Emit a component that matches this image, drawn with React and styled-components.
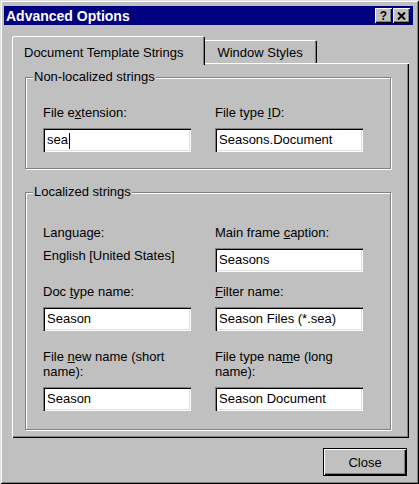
import styled, { createGlobalStyle } from "styled-components";

const GlobalStyle = createGlobalStyle`
  html, body {
    margin: 0;
    padding: 0;
    background: #c0c0c0;
  }
  * {
    box-sizing: border-box;
  }
`

const Window = styled.div`
  width: 419px;
  height: 484px;
  padding: 6px 6px 3px 4px;
  display: flex;
  flex-direction: column;
  background: #c0c0c0;
  font-family: "Liberation Sans", Arial, sans-serif;
  font-size: 13px;
  color: #000;
  box-shadow: inset 1px 1px #dfdfdf, inset -1px -1px #000, inset 2px 2px #fff, inset -2px -2px #808080;
`

const TitleBar = styled.div`
  height: 19px;
  padding: 0 3px 0 2px;
  display: flex;
  align-items: center;
  justify-content: space-between;
  background: #000080;
`

const Title = styled.span`
  color: #fff;
  font-weight: bold;
  font-size: 14px;
`

const TitleButtons = styled.div`
  display: flex;
  gap: 1px;
`

const TitleButton = styled.div`
  width: 17px;
  height: 15px;
  display: flex;
  align-items: center;
  justify-content: center;
  background: #c0c0c0;
  font-weight: bold;
  font-size: 12px;
  line-height: 1;
  box-shadow: inset 1px 1px #fff, inset -1px -1px #000, inset -2px -2px #808080;
`

const Body = styled.div`
  flex: 1;
  padding: 11px 4px 5px 8px;
  display: flex;
  flex-direction: column;
`

const TabRow = styled.div`
  height: 27px;
  display: flex;
  align-items: flex-end;
`

const Tab = styled.div`
  position: relative;
  height: ${({$active}) => $active ? "29px" : "23px"};
  margin-bottom: ${({$active}) => $active ? "-2px" : "0"};
  margin-left: ${({$active}) => $active ? "0" : "-2px"};
  padding: ${({$active}) => $active ? "9px 22px 0 12px" : "5px 14px 0 14px"};
  z-index: ${({$active}) => $active ? 2 : 1};
  line-height: 15px;
  white-space: nowrap;
  background: #c0c0c0;
  border-radius: 2px 2px 0 0;
  box-shadow: inset 1px 1px #fff, inset -1px 0 #000, inset -2px 0 #808080;
`

const Panel = styled.div`
  height: 375px;
  padding: 14px 18px 8px 13px;
  display: flex;
  flex-direction: column;
  gap: 23px;
  box-shadow: inset 1px 1px #fff, inset -1px -1px #000, inset -2px -2px #808080;
`

const GroupBox = styled.div`
  position: relative;
  padding: ${({$pad}) => $pad};
  border: 1px solid #808080;
  box-shadow: inset 1px 1px #fff, 1px 1px #fff;
`

const Legend = styled.span`
  position: absolute;
  top: -9px;
  left: 7px;
  padding: 0 1px;
  line-height: 15px;
  background: #c0c0c0;
`

const FieldGrid = styled.div`
  display: grid;
  grid-template-columns: 148px 148px;
  column-gap: 24px;
  row-gap: 12px;
`

const Field = styled.div`
  display: flex;
  flex-direction: column;
  margin-top: ${({$spaced}) => $spaced ? "6px" : "0"};
`

const Label = styled.label`
  line-height: 15px;
  margin-bottom: 8px;
`

const Key = styled.u`
  text-decoration: underline;
  text-underline-offset: 1px;
`

const StaticText = styled.span`
  line-height: 15px;
`

const TextBox = styled.div`
  height: 24px;
  padding: 0 4px;
  line-height: 24px;
  white-space: nowrap;
  overflow: hidden;
  background: #fff;
  box-shadow: inset 1px 1px #808080, inset 2px 2px #000, inset -1px -1px #fff, inset -2px -2px #dfdfdf;
`

const Caret = styled.span`
  display: inline-block;
  width: 1px;
  height: 16px;
  margin-left: 1px;
  vertical-align: middle;
  background: #000;
`

const Footer = styled.div`
  margin-top: 10px;
  padding-right: 2px;
  display: flex;
  justify-content: flex-end;
`

const Button = styled.button`
  width: 84px;
  height: 28px;
  padding: 0;
  font-family: inherit;
  font-size: 13px;
  color: #000;
  background: #c0c0c0;
  border: 1px solid #000;
  box-shadow: inset 1px 1px #fff, inset -1px -1px #000, inset -2px -2px #808080;
`

const CloseGlyph = () => (
    <svg width="9" height="8" viewBox="0 0 9 8">
        <path d="M1 0.5 L8 7.5 M8 0.5 L1 7.5" stroke="#000" strokeWidth="2"/>
    </svg>
)

const App = () => {
    return (
        <>
            <GlobalStyle/>
            <Window>
                <TitleBar>
                    <Title>Advanced Options</Title>
                    <TitleButtons>
                        <TitleButton>?</TitleButton>
                        <TitleButton><CloseGlyph/></TitleButton>
                    </TitleButtons>
                </TitleBar>
                <Body>
                    <TabRow>
                        <Tab $active>Document Template Strings</Tab>
                        <Tab>Window Styles</Tab>
                    </TabRow>
                    <Panel>
                        <GroupBox $pad="27px 0 16px 17px">
                            <Legend>Non-localized strings</Legend>
                            <FieldGrid>
                                <Field>
                                    <Label>File e<Key>x</Key>tension:</Label>
                                    <TextBox>sea<Caret/></TextBox>
                                </Field>
                                <Field>
                                    <Label>File type <Key>I</Key>D:</Label>
                                    <TextBox>Seasons.Document</TextBox>
                                </Field>
                            </FieldGrid>
                        </GroupBox>
                        <GroupBox $pad="32px 0 18px 17px">
                            <Legend>Localized strings</Legend>
                            <FieldGrid>
                                <Field>
                                    <Label>Language:</Label>
                                    <StaticText>English [United States]</StaticText>
                                </Field>
                                <Field>
                                    <Label>Main frame <Key>c</Key>aption:</Label>
                                    <TextBox>Seasons</TextBox>
                                </Field>
                                <Field>
                                    <Label>Doc <Key>t</Key>ype name:</Label>
                                    <TextBox>Season</TextBox>
                                </Field>
                                <Field>
                                    <Label><Key>F</Key>ilter name:</Label>
                                    <TextBox>Season Files (*.sea)</TextBox>
                                </Field>
                                <Field $spaced>
                                    <Label>File <Key>n</Key>ew name (short<br/>name):</Label>
                                    <TextBox>Season</TextBox>
                                </Field>
                                <Field $spaced>
                                    <Label>File type na<Key>m</Key>e (long<br/>name):</Label>
                                    <TextBox>Season Document</TextBox>
                                </Field>
                            </FieldGrid>
                        </GroupBox>
                    </Panel>
                    <Footer>
                        <Button>Close</Button>
                    </Footer>
                </Body>
            </Window>
        </>
    )
}

export default App
